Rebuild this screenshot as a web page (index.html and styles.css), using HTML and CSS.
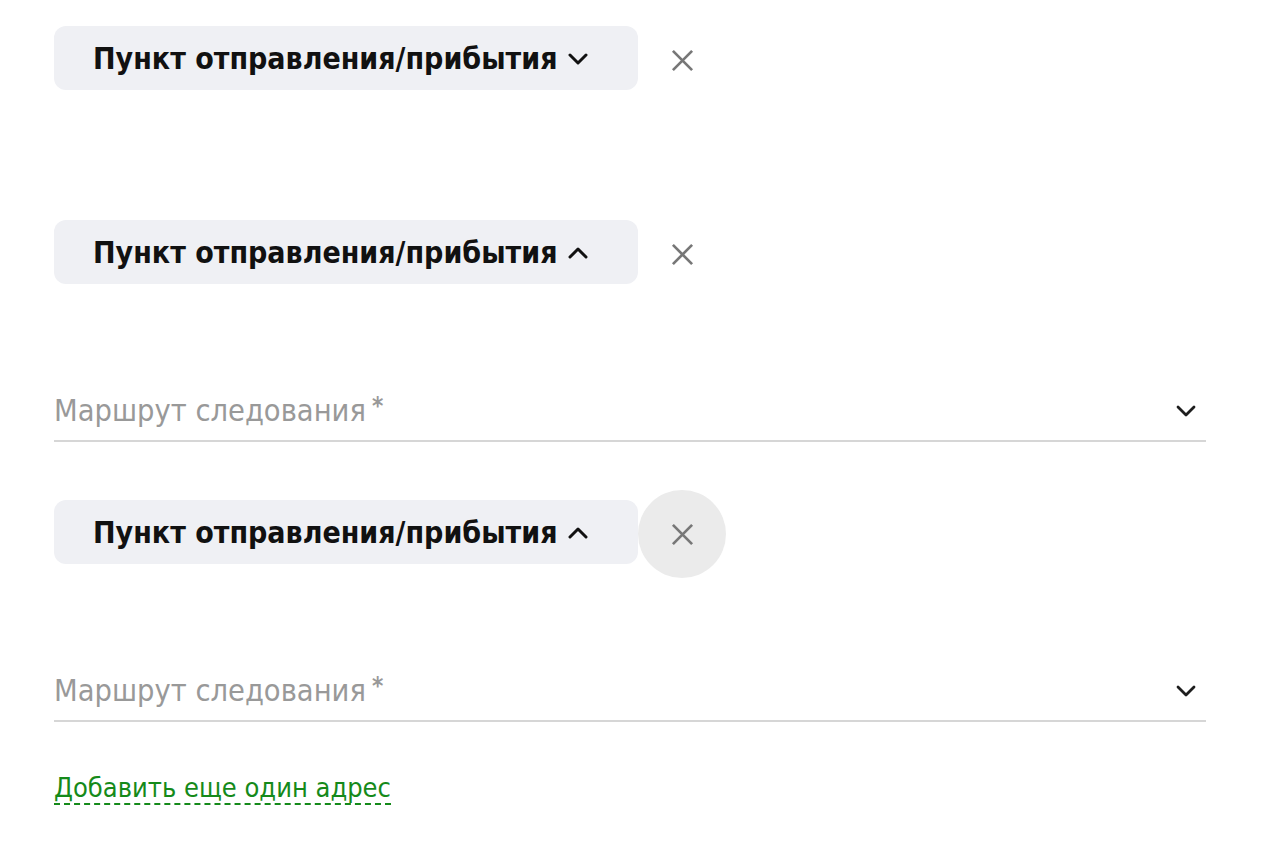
FILE: index.html
```html
<!DOCTYPE html>
<html lang="ru">
<head>
<meta charset="utf-8">
<link rel="stylesheet" href="styles.css">
</head>
<body>
<div class="page">
  <div class="row r1">
    <button class="chip">Пункт отправления/прибытия
      <svg class="chev" viewBox="0 0 20 12" width="20" height="12"><path d="M2 2l8 8 8-8" fill="none" stroke="#111" stroke-width="3" stroke-linecap="round" stroke-linejoin="round"/></svg>
    </button>
    <span class="close"><svg viewBox="0 0 24 24" width="24" height="24"><path d="M2 2L22 22M22 2L2 22" stroke="#777" stroke-width="2.8"/></svg></span>
  </div>
  <div class="row r2">
    <button class="chip">Пункт отправления/прибытия
      <svg class="chev" viewBox="0 0 20 12" width="20" height="12"><path d="M2 10l8-8 8 8" fill="none" stroke="#111" stroke-width="3" stroke-linecap="round" stroke-linejoin="round"/></svg>
    </button>
    <span class="close"><svg viewBox="0 0 24 24" width="24" height="24"><path d="M2 2L22 22M22 2L2 22" stroke="#777" stroke-width="2.8"/></svg></span>
  </div>
  <div class="field f1">
    <span class="ph">Маршрут следования<span class="star">*</span></span>
    <svg viewBox="0 0 24 24" width="24" height="24"><path d="M4 8l8 8 8-8" fill="none" stroke="#1e1e1e" stroke-width="2.8" stroke-linecap="round" stroke-linejoin="round"/></svg>
  </div>
  <div class="row r3">
    <button class="chip">Пункт отправления/прибытия
      <svg class="chev" viewBox="0 0 20 12" width="20" height="12"><path d="M2 10l8-8 8 8" fill="none" stroke="#111" stroke-width="3" stroke-linecap="round" stroke-linejoin="round"/></svg>
    </button>
    <span class="close hover"><svg viewBox="0 0 24 24" width="24" height="24"><path d="M2 2L22 22M22 2L2 22" stroke="#777" stroke-width="2.8"/></svg></span>
  </div>
  <div class="field f2">
    <span class="ph">Маршрут следования<span class="star">*</span></span>
    <svg viewBox="0 0 24 24" width="24" height="24"><path d="M4 8l8 8 8-8" fill="none" stroke="#1e1e1e" stroke-width="2.8" stroke-linecap="round" stroke-linejoin="round"/></svg>
  </div>
  <a class="add" href="#">Добавить еще один адрес</a>
</div>
</body>
</html>
```
FILE: styles.css
```css
html, body { margin: 0; padding: 0; background: #fff; }
body { font-family: "DejaVu Sans Condensed", "DejaVu Sans", sans-serif; }
.page { padding: 26px 60px 0 54px; display: flex; flex-direction: column; align-items: flex-start; }
.row { display: flex; align-items: center; }
.r2 { margin-top: 130px; }
.r3 { margin-top: 58px; }
.chip {
  width: 584px; height: 64px; border: 0; border-radius: 12px; background: #eff0f4;
  display: flex; align-items: center; justify-content: flex-start; gap: 10px;
  font-family: inherit; font-weight: bold; font-size: 30px; color: #111; padding: 0 0 0 39px;
}
.chev { margin-top: 2px; }
.close { width: 88px; height: 88px; margin: -10px 0 -14px; border-radius: 50%; display: flex; align-items: center; justify-content: center; }
.close svg { width: 23px; height: 23px; }
.close.hover { background: #ebebeb; }
.field {
  width: 1152px; display: flex; align-items: center; justify-content: space-between;
  border-bottom: 2px solid #d6d6d6; height: 62px; box-sizing: border-box; padding: 0 8px 0 0;
}
.field svg { margin-top: 2px; }
.f1 { margin-top: 96px; }
.f2 { margin-top: 96px; }
.ph { font-size: 30.5px; color: #999; }
.star { font-size: 24px; font-weight: bold; color: #999; vertical-align: 7px; margin-left: 6px; }
.add {
  display: inline-block; margin-top: 51px; font-size: 27px; color: #158a1a; text-decoration: none;
  border-bottom: 2px dashed #158a1a; line-height: 30px;
}
```
